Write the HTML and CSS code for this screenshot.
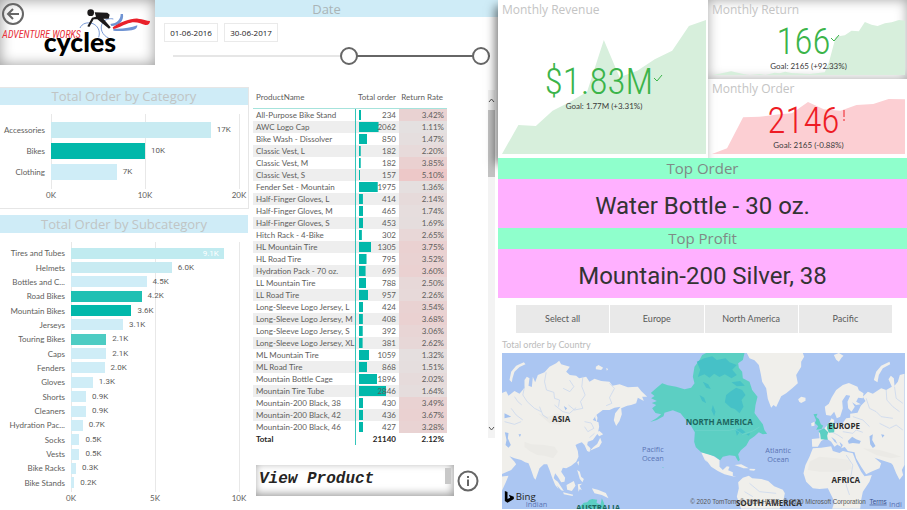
FILE: index.html
```html
<!DOCTYPE html>
<html lang="en">
<head>
<meta charset="utf-8">
<title>Adventure Works Cycles - Sales report</title>
<link rel="stylesheet" href="styles.css">
</head>
<body>
<main class="report">
  <section class="left">
    <header class="top">
      <div class="logo">
        <button class="back" aria-label="Back">
          <svg viewBox="0 0 24 24"><circle cx="12" cy="12" r="10"/><path d="M18 12H7M12 7l-5 5 5 5"/></svg>
        </button>
        <svg class="brand" viewBox="0 0 465 195" role="img" aria-label="Adventure Works Cycles">
          <g fill="none" stroke="#7b9bd6" stroke-width="3">
            <path d="M240 84C246 70 262 66 276 70C294 76 302 94 296 112"/>
            <path d="M326 114C306 106 298 84 308 68C316 58 328 54 340 57"/>
          </g>
          <path fill="#6f93d3" d="M331 72C352 70 362 58 362 42L369 42C372 62 358 78 334 78ZM340 86C362 88 392 84 412 76C412 86 404 92 380 92C364 93 350 93 340 92Z"/>
          <path fill="#e9212a" d="M338 82C362 66 394 54 414 56C430 58 440 62 450 63C450 70 446 76 436 75C424 72 410 64 392 68C372 72 358 84 340 87Z"/>
          <g fill="#1c1a1b"><circle cx="272" cy="38" r="10"/><path d="M284 37L322 38L329 44L326 56L310 56L332 82L327 86L292 58L281 58L268 81L262 79L276 53L288 50Z"/></g>
          <text class="brand-a" x="7" y="114">ADVENTURE WORKS</text>
          <text class="brand-b" x="131" y="156">cycles</text>
        </svg>
      </div>
      <div class="date">
        <h2 class="band">Date</h2>
        <div class="dates">
          <input type="text" value="01-06-2016" aria-label="Start date">
          <input type="text" value="30-06-2017" aria-label="End date">
        </div>
        <div class="range">
          <input type="range" class="from" min="0" max="100" value="57" aria-label="Range start">
          <input type="range" class="to" min="0" max="100" value="100" aria-label="Range end">
        </div>
      </div>
    </header>

    <div class="columns">
      <div class="charts">
        <section class="card category">
          <h2 class="band">Total Order by Category</h2>
          <div class="chart">
            <div class="lines"></div>
            <ul class="rows">
              <li><span>Accessories</span><div><i class="c2" style="width:85%"></i><b>17K</b></div></li>
              <li><span>Bikes</span><div><i class="c5" style="width:50%"></i><b>10K</b></div></li>
              <li><span>Clothing</span><div><i class="c1" style="width:35%"></i><b>7K</b></div></li>
            </ul>
            <div class="axis"><span>0K</span><span>10K</span><span>20K</span></div>
          </div>
        </section>
        <section class="card sub">
          <h2 class="band">Total Order by Subcategory</h2>
          <div class="chart">
            <div class="lines"></div>
            <ul class="rows">
              <li><span>Tires and Tubes</span><div><i class="c3" style="width:91%"><em>9.1K</em></i></div></li>
              <li><span>Helmets</span><div><i class="c2" style="width:60%"></i><b>6.0K</b></div></li>
              <li><span>Bottles and C...</span><div><i class="c1" style="width:45%"></i><b>4.5K</b></div></li>
              <li><span>Road Bikes</span><div><i class="c6" style="width:42%"></i><b>4.2K</b></div></li>
              <li><span>Mountain Bikes</span><div><i class="c5" style="width:36%"></i><b>3.6K</b></div></li>
              <li><span>Jerseys</span><div><i class="c1" style="width:31%"></i><b>3.1K</b></div></li>
              <li><span>Touring Bikes</span><div><i class="c4" style="width:21%"></i><b>2.1K</b></div></li>
              <li><span>Caps</span><div><i class="c1" style="width:21%"></i><b>2.1K</b></div></li>
              <li><span>Fenders</span><div><i class="c1" style="width:20%"></i><b>2.0K</b></div></li>
              <li><span>Gloves</span><div><i class="c1" style="width:13%"></i><b>1.3K</b></div></li>
              <li><span>Shorts</span><div><i class="c1" style="width:9%"></i><b>0.9K</b></div></li>
              <li><span>Cleaners</span><div><i class="c1" style="width:9%"></i><b>0.9K</b></div></li>
              <li><span>Hydration Pac...</span><div><i class="c1" style="width:7%"></i><b>0.7K</b></div></li>
              <li><span>Socks</span><div><i class="c1" style="width:5%"></i><b>0.5K</b></div></li>
              <li><span>Vests</span><div><i class="c1" style="width:5%"></i><b>0.5K</b></div></li>
              <li><span>Bike Racks</span><div><i class="c1" style="width:3%"></i><b>0.3K</b></div></li>
              <li><span>Bike Stands</span><div><i class="c1" style="width:2%"></i><b>0.2K</b></div></li>
            </ul>
            <div class="axis"><span>0K</span><span>5K</span><span>10K</span></div>
          </div>
        </section>
      </div>

      <div class="products">
        <div class="tablebox">
          <table>
            <thead><tr><th>ProductName</th><th>Total order</th><th>Return Rate</th></tr></thead>
            <tbody>
              <tr><td>All-Purpose Bike Stand</td><td style="--v:234">234</td><td style="--r:3.42">3.42%</td></tr>
              <tr><td>AWC Logo Cap</td><td style="--v:2062">2062</td><td style="--r:1.11">1.11%</td></tr>
              <tr><td>Bike Wash - Dissolver</td><td style="--v:850">850</td><td style="--r:1.47">1.47%</td></tr>
              <tr><td>Classic Vest, L</td><td style="--v:182">182</td><td style="--r:2.20">2.20%</td></tr>
              <tr><td>Classic Vest, M</td><td style="--v:182">182</td><td style="--r:3.85">3.85%</td></tr>
              <tr><td>Classic Vest, S</td><td style="--v:157">157</td><td style="--r:5.10">5.10%</td></tr>
              <tr><td>Fender Set - Mountain</td><td style="--v:1975">1975</td><td style="--r:1.36">1.36%</td></tr>
              <tr><td>Half-Finger Gloves, L</td><td style="--v:414">414</td><td style="--r:2.14">2.14%</td></tr>
              <tr><td>Half-Finger Gloves, M</td><td style="--v:465">465</td><td style="--r:1.74">1.74%</td></tr>
              <tr><td>Half-Finger Gloves, S</td><td style="--v:453">453</td><td style="--r:1.69">1.69%</td></tr>
              <tr><td>Hitch Rack - 4-Bike</td><td style="--v:302">302</td><td style="--r:2.65">2.65%</td></tr>
              <tr><td>HL Mountain Tire</td><td style="--v:1305">1305</td><td style="--r:3.75">3.75%</td></tr>
              <tr><td>HL Road Tire</td><td style="--v:795">795</td><td style="--r:3.52">3.52%</td></tr>
              <tr><td>Hydration Pack - 70 oz.</td><td style="--v:695">695</td><td style="--r:3.60">3.60%</td></tr>
              <tr><td>LL Mountain Tire</td><td style="--v:788">788</td><td style="--r:2.50">2.50%</td></tr>
              <tr><td>LL Road Tire</td><td style="--v:957">957</td><td style="--r:2.26">2.26%</td></tr>
              <tr><td>Long-Sleeve Logo Jersey, L</td><td style="--v:424">424</td><td style="--r:3.54">3.54%</td></tr>
              <tr><td>Long-Sleeve Logo Jersey, M</td><td style="--v:408">408</td><td style="--r:3.68">3.68%</td></tr>
              <tr><td>Long-Sleeve Logo Jersey, S</td><td style="--v:392">392</td><td style="--r:3.06">3.06%</td></tr>
              <tr><td>Long-Sleeve Logo Jersey, XL</td><td style="--v:381">381</td><td style="--r:2.62">2.62%</td></tr>
              <tr><td>ML Mountain Tire</td><td style="--v:1059">1059</td><td style="--r:1.32">1.32%</td></tr>
              <tr><td>ML Road Tire</td><td style="--v:868">868</td><td style="--r:1.51">1.51%</td></tr>
              <tr><td>Mountain Bottle Cage</td><td style="--v:1896">1896</td><td style="--r:2.02">2.02%</td></tr>
              <tr><td>Mountain Tire Tube</td><td style="--v:2846">2846</td><td style="--r:1.64">1.64%</td></tr>
              <tr><td>Mountain-200 Black, 38</td><td style="--v:430">430</td><td style="--r:3.49">3.49%</td></tr>
              <tr><td>Mountain-200 Black, 42</td><td style="--v:436">436</td><td style="--r:3.67">3.67%</td></tr>
              <tr><td>Mountain-200 Black, 46</td><td style="--v:427">427</td><td style="--r:3.28">3.28%</td></tr>
            </tbody>
            <tfoot><tr><td>Total</td><td>21140</td><td>2.12%</td></tr></tfoot>
          </table>
          <div class="scroll">
            <svg viewBox="0 0 7 5"><path d="M1 4l2.500-3L6 4"/></svg>
            <div class="thumb"></div>
            <svg viewBox="0 0 7 5"><path d="M1 1l2.500 3L6 1"/></svg>
          </div>
        </div>
        <div class="view">
          <div class="viewbox"><span>View Product</span><i></i></div>
          <button class="info" aria-label="Information">
            <svg viewBox="0 0 22 22"><circle cx="11" cy="11" r="9.500"/><path d="M11 9.500V16M11 6v2"/></svg>
          </button>
        </div>
      </div>
    </div>
  </section>

  <section class="right">
    <div class="kpis">
      <article class="kpi revenue good">
        <h2>Monthly Revenue</h2>
        <svg class="area" viewBox="21 60 609 402" preserveAspectRatio="none"><path d="M21 462L70 375L122 378L172 332L222 307L275 275L325 120L372 232L425 212L477 178L529 152L579 78L630 60V462Z"/></svg>
        <div class="value"><p>$1.83M<svg viewBox="0 0 10 8"><path d="M1 4l3 3 5-6"/></svg></p><small>Goal: 1.77M (+3.31%)</small></div>
      </article>
      <article class="kpi return good">
        <h2>Monthly Return</h2>
        <svg class="area" viewBox="38 60 577 165" preserveAspectRatio="none"><path d="M38 225L60 221L95 214L135 223L150 225L180 222L198 225L225 218L240 220L257 215L275 219L330 222L375 217L388 185L408 110L435 106L455 92L477 94L495 66L515 74L533 78L555 70L575 67L597 60L615 62V225Z"/></svg>
        <div class="value"><p>166<svg viewBox="0 0 10 8"><path d="M1 4l3 3 5-6"/></svg></p><small>Goal: 2165 (+92.33%)</small></div>
      </article>
      <article class="kpi order bad">
        <h2>Monthly Order</h2>
        <svg class="area" viewBox="38 297 577 165" preserveAspectRatio="none"><path d="M38 462L83 445L131 352L180 350L240 343L277 340L325 306L372 328L422 332L470 315L520 312L566 297L615 298V462Z"/></svg>
        <div class="value"><p>2146<svg viewBox="0 0 10 12"><path d="M5 1v7M5 10v2"/></svg></p><small>Goal: 2165 (-0.88%)</small></div>
      </article>
    </div>

    <div class="tops">
      <h2>Top Order</h2>
      <p>Water Bottle - 30 oz.</p>
      <h2>Top Profit</h2>
      <p>Mountain-200 Silver, 38</p>
    </div>

    <div class="slicer">
      <button>Select all</button><button>Europe</button><button>North America</button><button>Pacific</button>
    </div>

    <section class="mapbox">
      <h3>Total order by Country</h3>
      <svg class="map" viewBox="0 0 1212 468" preserveAspectRatio="xMidYMid slice" role="img" aria-label="Orders by country">
        <rect width="1212" height="468" fill="#abc6f2"/>
        <g transform="translate(-21 -24)">
          <g class="land">
            <path d="M21 145L35 139L42 152L60 138L75 146L90 128L90 105L97 95L105 100L102 122L112 126L115 95L122 112L130 90L150 82L165 65L185 55L194 47L200 58L226 65L215 80L226 90L245 92L254 100L275 95L285 110L300 101L320 108L345 110L354 122L375 118L400 127L430 125L440 138L458 155L443 155L448 168L430 158L425 175L410 180L398 182L380 190L382 208L375 228L365 243L358 226L362 205L378 185L360 188L345 195L325 195L305 210L295 225L312 232L314 245L310 265L295 285L280 290L278 300L288 310L285 321L278 318L270 300L262 292L250 296L243 300L250 318L252 335L245 350L230 362L215 370L205 368L200 380L212 398L210 410L200 412L190 395L182 385L178 398L185 415L192 432L182 420L172 395L165 375L158 358L148 358L135 370L128 390L123 404L118 398L108 370L102 355L92 352L80 345L60 340L45 334L60 350L65 358L50 375L21 388Z"/>
            <path d="M45 105L50 80L65 62L88 52L93 58L75 66L60 80L54 100L52 112ZM304 65L312 60L326 68L320 75L304 73ZM335 69L341 72L337 77ZM304 262L315 258L326 268L314 274ZM317 278L322 292L314 305L298 312L286 317L297 306L308 297ZM303 202L309 218L307 232L302 218ZM216 420L238 408L243 422L232 438L218 434ZM174 398L190 410L208 438L200 436L184 418ZM206 442L236 449L234 453L208 448ZM248 352L254 348L252 362ZM248 375L256 380L260 395L268 402L264 412L256 402ZM250 418L263 416L255 422L262 436L256 432L252 440ZM292 430L310 434L334 444L342 460L322 450L300 445ZM21 395L42 392L34 412L21 440Z"/>
          </g>
          <g class="relief"><path d="M90 290L110 298L150 300L180 305L190 320L176 340L150 332L128 330L105 318L90 305Z"/><path d="M130 205L160 215L190 205L215 215L200 240L165 235Z"/></g>
          <g class="water"><path d="M31 262L42 264L40 280L49 300L42 308L33 300L36 285ZM72 268L80 268L76 276ZM208 183L218 190L213 196ZM30 205L50 215L30 220Z"/></g>
          <g class="river"><path d="M90 125L85 150L98 170L120 190L140 200M60 155L70 170L82 180M155 82L150 110L156 135L178 142L180 160L195 165L192 185M265 95L262 125L272 150L258 170L265 190L240 195L222 180M345 115L360 130L345 158L352 175L335 182M135 185L145 210L160 220M225 105L238 125L226 140L206 130M270 230L290 234L298 250L280 260L270 245M300 265L285 278M180 180L205 200L225 205L245 188M50 190L65 210L85 225M30 230L60 238L80 230"/></g>
          <path class="hot" d="M248 491L258 483L268 473L278 472L284 465L293 462L308 464L306 473L318 479L322 460L328 473L333 491Z"/>
          <path class="hot" d="M503 367L507 366L506 370Z"/>
        </g>
        <g transform="translate(594 -24)">
          <g class="land">
            <path d="M5 322L30 328L45 335L60 345L60 365L70 375L82 364L90 365L86 376L100 382L100 392L110 396L95 393L75 388L55 378L35 365L20 345L12 333L24 352L16 345ZM105 360L125 358L148 370L132 370ZM150 371L168 372L164 377L150 376ZM118 430L116 412L130 398L148 392L158 400L185 402L206 408L224 424L250 434L256 445L252 465L240 491L125 491L112 455Z"/>
            <path d="M142 24L150 40L165 46L178 60L184 88L188 110L200 130L205 162L215 188L222 180L230 186L245 154L260 145L280 128L295 115L290 90L305 65L305 50L314 35L310 24ZM296 163L305 155L318 158L318 167L305 174L299 170ZM403 30L418 24L432 32L426 38L418 50L410 44ZM335 235L345 230L345 242L336 244Z"/>
            <path d="M378 200L376 185L388 176L396 158L410 135L430 120L448 114L474 125L478 136L492 145L490 160L476 158L470 170L484 178L470 180L458 172L466 185L456 200L446 190L444 170L452 152L440 150L428 168L430 190L422 215L412 220L404 200L394 212L380 210Z"/>
            <path d="M337 282L360 280L358 260L375 250L388 236L396 220L404 225L402 236L430 234L440 220L452 218L452 206L474 203L484 182L498 168L490 155L505 140L520 146L545 130L560 135L577 125L567 103L574 92L583 100L585 122L595 110L601 90L615 86V360L607 375L611 390L600 404L590 385L580 360L575 355L545 345L525 338L545 355L540 370L515 380L500 388L485 365L470 340L465 322L445 318L436 306L425 310L430 300L420 290L425 305L415 300L408 285L395 275L405 290L415 298L405 305L395 290L380 280L365 288L355 305L338 305Z"/>
            <path d="M340 310L365 308L395 304L400 318L420 324L430 318L460 325L470 350L485 380L495 394L517 390L510 410L490 440L485 465L482 491H398L405 470L395 450L385 430L360 432L340 430L320 410L312 385L318 360L330 335ZM523 105L530 80L545 62L570 50L572 58L550 70L538 90L534 112Z"/>
          </g>
          <g class="relief"><path d="M330 350L360 335L410 340L450 345L458 372L420 380L360 380L325 375Z"/><path d="M490 310L540 315L575 325L605 335L575 340L530 330Z"/></g>
          <g class="water"><path d="M445 288L458 275L470 283L484 288L480 296L460 294L448 296ZM510 274L520 268L518 285L528 303L520 309L512 298ZM545 268L555 270L549 278Z"/></g>
          <g class="river"><path d="M560 135L562 165L580 185L600 200M500 160L510 190L530 200L545 215L580 220M460 215L490 225L510 245M430 260L460 265L470 255L490 262M585 125L590 160L610 175M540 235L570 250L590 240L610 255M395 260L415 270L430 280M440 330L460 360L455 390L440 420L450 450M150 415L180 440L230 445M135 440L160 455"/></g>
          <path class="hot" d="M-145 160L-135 153L-146 144L-130 130L-112 115L-95 121L-70 125L-45 133L-25 128L-15 115L-20 95L-15 65L0 45L8 30L20 24H135L130 45L116 55L118 68L128 80L130 100L150 110L158 135L174 155L168 180L165 204L180 225L190 238L195 256L203 266L190 268L178 262L165 274L150 284L140 302L124 316L116 328L121 345L116 349L107 333L90 331L70 335L62 346L45 334L25 328L5 322L-11 307L-16 290L-14 262L-27 240L-45 220L-57 205L-80 196L-105 203L-108 214L-128 225L-148 231L-128 219L-115 208L-132 204L-142 190L-130 180L-143 174L-128 168Z"/>
          <path class="hot" d="M342 208L354 206L350 216L358 222L364 238L371 242L366 252L350 254L356 244L346 234L350 226ZM357 258L374 250L386 262L383 272L385 284L364 283L362 266ZM384 238L394 232L406 236L404 262L388 263L382 250Z"/>
          <path class="lakes" d="M-8 50L14 40L38 34L52 45L78 40L90 52L112 60L98 74L112 90L96 100L76 88L60 96L44 86L30 98L15 88L-5 96L2 74ZM80 150L92 140L110 128L128 135L138 150L126 165L132 185L120 205L106 192L94 188L76 172ZM10 110L26 118L34 132L20 128ZM0 150L14 158L20 175L8 168ZM96 112L122 108L136 122L112 124ZM108 254L124 250L138 262L126 268L120 262L112 272ZM140 268L152 264L148 272ZM40 180L48 200L44 214L36 196Z"/>
          <path class="border" d="M-14 256H90L105 252L130 268L160 258L180 246"/>
        </g>
        <g class="labels">
          <text x="179" y="208">ASIA</text><text x="653" y="216">NORTH AMERICA</text><text x="1028" y="229">EUROPE</text><text x="1033" y="391">AFRICA</text><text x="802" y="460">SOUTH AMERICA</text><text x="290" y="475">AUSTRALIA</text>
        </g>
        <g class="seas">
          <text x="454" y="297">Pacific</text><text x="454" y="323">Ocean</text><text x="830" y="301">Atlantic</text><text x="830" y="327">Ocean</text><text x="105" y="463">Indian</text><text x="1182" y="463">Indi</text>
        </g>
        <path d="M10 414L18 417V438L26 434L22 425L37 431V438L18 449L10 444Z"/>
        <text class="bing" x="43" y="440">Bing</text>
        <text class="credit" x="566" y="452">© 2020 TomTom, © 2020 HERE, © 2020 Microsoft Corporation</text>
        <text class="credit terms" x="1104" y="452">Terms</text>
      </svg>
    </section>
  </section>
</main>
</body>
</html>
```
FILE: styles.css
```css
* { box-sizing: border-box; }
body {
  margin: 0;
  background: #fff;
  color: #605e5c;
  font: 8px/12px "Lato", "Open Sans", sans-serif;
}
h2, h3, p, ul { margin: 0; padding: 0; font-weight: 400; }
h2 { font-family: "Open Sans", "Noto Sans", sans-serif; }
ul { list-style: none; }
button { border: 0; padding: 0; font: inherit; color: inherit; cursor: pointer; }

.report { display: grid; grid-template-columns: 498fr 409fr; min-height: 100vh; overflow: hidden; }
.left, .right { min-width: 0; }
.band { background: #cfecf7; color: #c0c4c4; text-align: center; font-size: 13px; line-height: 17px; }

/* Header */
.top { display: grid; grid-template-columns: 155px 1fr; height: 87px; }
.logo { position: relative; height: 65px; box-shadow: inset 0 0 14px rgba(0, 0, 0, .4); }
.brand { display: block; width: 155px; height: 65px; }
.brand-a { font: italic 400 30px "Roboto Condensed", "Roboto", sans-serif; fill: #e8303a; }
.brand-b { font: 900 80px "Lato", sans-serif; fill: #000; }
.back { position: absolute; left: 1px; top: 2px; width: 24px; height: 24px; background: none; }
.back svg, .info svg { display: block; width: 100%; height: 100%; fill: none; stroke: #666; stroke-width: 2; }
.date .band { color: #aab4b6; line-height: 16px; padding-top: 1px; }
.dates { display: flex; gap: 6px; padding: 6px 9px 0; }
.dates input {
  width: 54px; height: 19px; border: 1px solid #eaeaea; padding: 0;
  text-align: center; font: 8px "Open Sans", sans-serif; color: #222;
}
.range { display: grid; align-items: center; margin: 4px 8px 0 9px; height: 20px; background: linear-gradient(#e6e6e6, #e6e6e6) 9px 50% / calc(100% - 18px) 2px no-repeat; }
.range input { grid-area: 1 / 1; appearance: none; margin: 0; width: 100%; height: 18px; background: none; pointer-events: none; }
.range .from { background: linear-gradient(#666, #666) 100% 50% / 43% 2px no-repeat; }
.range input::-webkit-slider-thumb {
  appearance: none; width: 18px; height: 18px; border: 2px solid #666; border-radius: 50%; background: #fff; pointer-events: auto;
}

/* Bar charts */
.columns { display: grid; grid-template-columns: 1fr 1fr; }
.category { --label: 51px; --bar: 16px; border: 1px solid #e6e6e6; border-left: 0; height: 122px; margin-bottom: 6px; }
.sub { --label: 71px; --bar: 11px; padding-right: 1px; }
.sub .band { line-height: 18px; }
.chart { display: grid; grid-template-columns: var(--label) 1fr; padding: 9px 9px 0 0; }
.lines {
  grid-area: 1 / 2; margin-right: -1px;
  background: linear-gradient(#e8e8e8, #e8e8e8) 0 0 / 1px 100% no-repeat,
    linear-gradient(#e8e8e8, #e8e8e8) 50% 0 / 1px 100% no-repeat,
    linear-gradient(#e8e8e8, #e8e8e8) 100% 0 / 1px 100% no-repeat;
}
.rows { grid-area: 1 / 1 / 2 / 3; display: grid; grid-auto-rows: 21px; padding: 5px 0 7px; }
.sub .rows { height: 250px; grid-auto-rows: 1fr; padding: 4px 0 2px; }
.rows li { display: grid; grid-template-columns: var(--label) 1fr; align-items: center; min-height: 0; }
.rows div { display: flex; align-items: center; gap: 6px; }
.rows span { text-align: right; padding-right: 6px; white-space: nowrap; }
.rows i { flex: none; height: var(--bar); font-style: normal; }
.rows b { font: 400 8px/12px "Roboto", sans-serif; }
.rows em { display: block; text-align: right; padding-right: 5px; font: 8px/11px "Roboto", sans-serif; color: #fff; }
.rows .c1 { background: #cfedf7; }
.rows .c2 { background: #c8ebf2; }
.rows .c3 { background: #c0ebf0; }
.rows .c4 { background: #4dccc3; }
.rows .c5 { background: #01b8aa; }
.rows .c6 { background: #1fc0b3; }
.axis { grid-area: 2 / 2; display: flex; justify-content: space-between; margin: 0 -10px; }
.axis span { width: 20px; text-align: center; }

/* Product table */
.tablebox { display: flex; justify-content: space-between; align-items: flex-start; padding: 3px 3px 0 4px; height: 362px; }
table { border-collapse: collapse; width: 194px; height: 355px; table-layout: fixed; }
th { height: 18px; padding: 0 4px 3px 3px; font-weight: 400; text-align: right; white-space: nowrap; border-bottom: 1px solid #a6e3dc; }
th:first-child { text-align: left; width: 102px; }
th:nth-child(2) { width: 44px; padding-left: 0; padding-right: 3px; }
th:nth-child(3) { padding-left: 0; }
td { height: 12px; padding: 0 3px; line-height: 12px; text-align: right; white-space: nowrap; }
td:first-child { text-align: left; border-right: 1px solid #33c6bb; }
tbody tr:nth-child(even) { background: #eee; }
tbody td:nth-child(2) { background: linear-gradient(#01b8aa, #01b8aa) 3px 50% / calc(var(--v) * 27px / 2846) 10px no-repeat; }
tbody td:nth-child(3) { background: color-mix(in srgb, #edc8c8 calc((var(--r) - 1) * 24%), #e4e1e1); }
tfoot td { font-weight: 700; color: #252423; }
.scroll { width: 7px; height: 348px; background: #f3f3f3; display: grid; grid-template-rows: 20px 67px 1fr; justify-items: center; }
.scroll svg { width: 7px; height: 5px; align-self: center; fill: none; stroke: #555; }
.scroll svg:last-child { align-self: end; margin-bottom: 7px; }
.thumb { width: 7px; background: #c2c2c2; }
.view { display: flex; align-items: center; gap: 3px; padding: 16px 0 0 7px; }
.viewbox {
  display: flex; justify-content: space-between; width: 198px; height: 31px; padding: 3px;
  box-shadow: inset -1px -2px 9px rgba(0, 0, 0, .4);
}
.viewbox span { font: italic 700 16px/22px "Liberation Mono", monospace; color: #252423; }
.viewbox i { width: 6px; height: 16px; background: #c8c8c8; }
.info { width: 22px; height: 22px; background: none; }

/* KPI cards */
.right { display: flex; flex-direction: column; }
.kpis { display: grid; grid-template-columns: 210fr 199fr; grid-template-rows: 79px 79px; }
.kpi { display: grid; grid-template-rows: 20px 1fr; padding: 0 2px 4px 4px; background: #fff; }
.kpi h2 { font-size: 12px; line-height: 19px; color: #c4c4c4; }
.revenue { grid-row: 1 / 3; position: relative; box-shadow: -3px 6px 9px rgba(0, 0, 0, .5); }
.return { position: relative; box-shadow: inset 0 0 12px rgba(0, 0, 0, .35); }
.area { grid-area: 2 / 1; width: 100%; height: 100%; }
.good .area { fill: #d7efdc; }
.bad .area { fill: #fccfd3; }
.value { grid-area: 2 / 1; align-self: center; text-align: center; z-index: 1; }
.value p { font: 300 37px/37px "Roboto Condensed", "Roboto", sans-serif; color: #3bb44a; }
.bad .value p { color: #ee1c25; }
.value p svg { width: 10px; height: 8px; fill: none; stroke: currentColor; vertical-align: 12px; }
.bad .value p svg { height: 12px; }
.value small { display: block; font-size: 8px; line-height: 12px; color: #3a3a3a; }

.tops { position: relative; text-align: center; }
.tops h2 { background: #8fffcc; color: #7f8a86; font-size: 15px; line-height: 21px; }
.tops p { background: #ffb0ff; color: #333; font: 400 24px/44px "Roboto", sans-serif; padding-top: 5px; }

.slicer { display: grid; grid-template-columns: repeat(4, 1fr); gap: 1px; padding: 7px 15px 0 18px; }
.slicer button { height: 28px; background: #e9e9e9; color: #5a5a5a; font-size: 9px; }

.mapbox { display: flex; flex-direction: column; flex: 1; padding: 4px 2px 1px 4px; }
.mapbox h3 { font-size: 9px; line-height: 16px; color: #bbb; }
.map { flex: 1; width: 100%; height: 155px; min-height: 0; }
.land { fill: #f0efeb; }
.relief { fill: #ebeae6; }
.water { fill: #a3c1ef; }
.river { fill: none; stroke: #c3d3ef; stroke-width: 2; }
.hot { fill: #5ccfc3; }
.lakes { fill: #46c1c7; }
.border { fill: none; stroke: #8adbd3; stroke-width: 1; }
.labels text { font: 700 24px "Open Sans", sans-serif; fill: #2b2b2b; text-anchor: middle; }
.labels text:nth-child(2), .labels text:nth-child(6) { fill: #1c6660; }
.seas text { font: 400 22px "Open Sans", sans-serif; fill: #5a74b4; text-anchor: middle; }
.bing { font: 400 29px "Open Sans", sans-serif; fill: #222; }
.credit { font: 19px "Liberation Sans", sans-serif; fill: #555; }
.terms { fill: #36508c; text-decoration: underline; }
```
